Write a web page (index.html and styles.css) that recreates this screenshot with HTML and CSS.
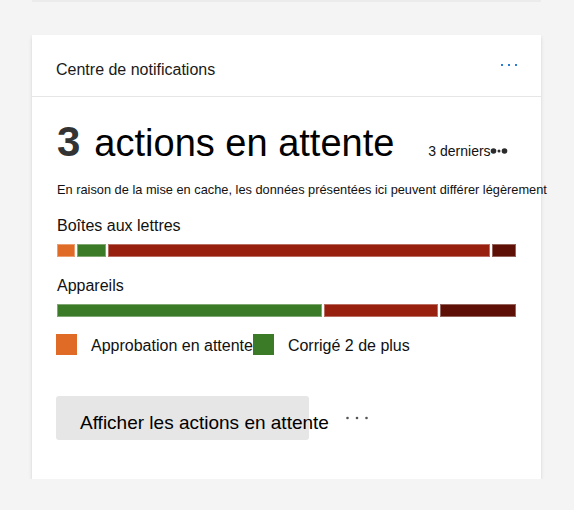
FILE: index.html
```html
<!DOCTYPE html>
<html lang="fr">
<head>
  <meta charset="UTF-8" />
  <meta name="viewport" content="width=device-width, initial-scale=1.0" />
  <title>Centre de notifications</title>
  <link rel="stylesheet" href="styles.css">
</head>
<body>
  <div class="prev-card"></div>

  <section class="card">
    <header class="card-header">
      <h2 class="card-title">Centre de notifications</h2>
      <svg class="more-blue" width="18" height="4" viewBox="0 0 18 4">
        <rect x="0" y="1" width="2" height="2" />
        <rect x="7" y="1" width="2" height="2" />
        <rect x="14" y="1" width="2" height="2" />
      </svg>
    </header>

    <div class="card-body">
      <div class="headline">
        <span class="count">3</span>
        <span class="count-label">actions en attente</span>
        <span class="recent">3 derniers<svg class="recent-dots" width="19" height="9" viewBox="0 0 19 9">
            <circle cx="4.5" cy="4" r="2.8" />
            <circle cx="10" cy="4" r="1.5" />
            <circle cx="15.5" cy="4" r="2.8" />
          </svg></span>
      </div>
      <p class="caption">En raison de la mise en cache, les données présentées ici peuvent différer légèrement</p>

      <div class="group">
        <div class="group-label">Boîtes aux lettres</div>
        <div class="bar">
          <span class="seg pending" style="flex: 16"></span>
          <span class="seg fixed" style="flex: 28"></span>
          <span class="seg high" style="flex: 387"></span>
          <span class="seg critical" style="flex: 22"></span>
        </div>
      </div>

      <div class="group">
        <div class="group-label">Appareils</div>
        <div class="bar">
          <span class="seg fixed" style="flex: 267"></span>
          <span class="seg high" style="flex: 113"></span>
          <span class="seg critical" style="flex: 75"></span>
        </div>
      </div>

      <div class="legend">
        <span class="swatch pending"></span>
        <span class="legend-text">Approbation en attente</span>
        <span class="swatch fixed"></span>
        <span class="legend-text">Corrigé 2 de plus</span>
      </div>

      <div class="actions">
        <button class="action-btn">Afficher les actions en attente</button>
        <svg class="more-gray" width="22" height="4" viewBox="0 0 22 4">
          <circle cx="1.5" cy="2" r="1.3" />
          <circle cx="11" cy="2" r="1.3" />
          <circle cx="20.5" cy="2" r="1.3" />
        </svg>
      </div>
    </div>
  </section>
</body>
</html>
```

FILE: styles.css
```css
:root {
  --bg: #f4f4f4;
  --fg: #111;
  --orange: #e06b26;
  --green: #3b7a27;
  --red: #98200e;
  --dark-red: #5e0f06;
}
body {
  margin: 0;
  font-family: 'Liberation Sans', Arial, sans-serif;
  background: var(--bg);
  color: var(--fg);
}
.prev-card {
  height: 2px;
  width: 509px;
  margin-left: 32px;
  background: #ebebeb;
}
.card {
  width: 509px;
  margin: 33px 0 0 32px;
  background: #fff;
  box-shadow: 0 1.6px 3.6px rgba(0, 0, 0, 0.13), 0 0.3px 0.9px rgba(0, 0, 0, 0.1);
}
.card-header {
  display: flex;
  justify-content: space-between;
  align-items: flex-start;
  height: 62px;
  box-sizing: border-box;
  padding: 26px 22px 0 24px;
  border-bottom: 1px solid #e6e6e6;
}
.card-title {
  margin: 0;
  font-size: 16px;
  line-height: 18px;
  font-weight: normal;
  color: #1b1a19;
}
.more-blue {
  margin-top: 2px;
  fill: #2b7cd3;
}
.card-body {
  padding: 24px 25px 39px 25px;
}
.headline {
  display: flex;
  align-items: baseline;
  white-space: nowrap;
}
.count {
  font-size: 42px;
  line-height: 42px;
  font-weight: bold;
  color: #333;
}
.count-label {
  margin-left: 14px;
  font-size: 38px;
  line-height: 38px;
  color: #000;
}
.recent {
  margin-left: 34px;
  font-size: 14px;
  line-height: 16px;
}
.recent-dots {
  margin-left: -2px;
  fill: #2b2b2b;
  vertical-align: baseline;
}
.caption {
  margin: 19px 0 0;
  font-size: 12.8px;
  line-height: 15px;
  white-space: nowrap;
}
.group {
  margin-top: 20px;
}
.group:first-of-type {
  margin-top: 23px;
}
.group-label {
  font-size: 16px;
  line-height: 18px;
  margin-bottom: 9px;
}
.bar {
  display: flex;
  gap: 2px;
  height: 13px;
}
.seg {
  box-sizing: border-box;
  border: 1px solid rgba(255, 255, 255, 0.35);
}
.pending { background: var(--orange); }
.fixed { background: var(--green); }
.high { background: var(--red); }
.critical { background: var(--dark-red); }
.legend {
  display: flex;
  align-items: flex-end;
  margin: 17px 0 0 -1px;
  height: 21px;
}
.swatch {
  width: 21px;
  height: 21px;
  margin-right: 14px;
  border: none;
}
.legend-text {
  font-size: 16px;
  line-height: 18px;
}
.actions {
  display: flex;
  align-items: center;
  margin-top: 41px;
}
.action-btn {
  width: 253px;
  height: 44px;
  box-sizing: border-box;
  margin-left: -1px;
  padding: 8px 0 0 24px;
  border: none;
  border-radius: 3px;
  background: #e6e6e6;
  font-family: inherit;
  font-size: 19px;
  line-height: 21px;
  color: #000;
  text-align: left;
  white-space: nowrap;
  overflow: visible;
}
.more-gray {
  margin-left: 37px;
  fill: #555;
}
```
